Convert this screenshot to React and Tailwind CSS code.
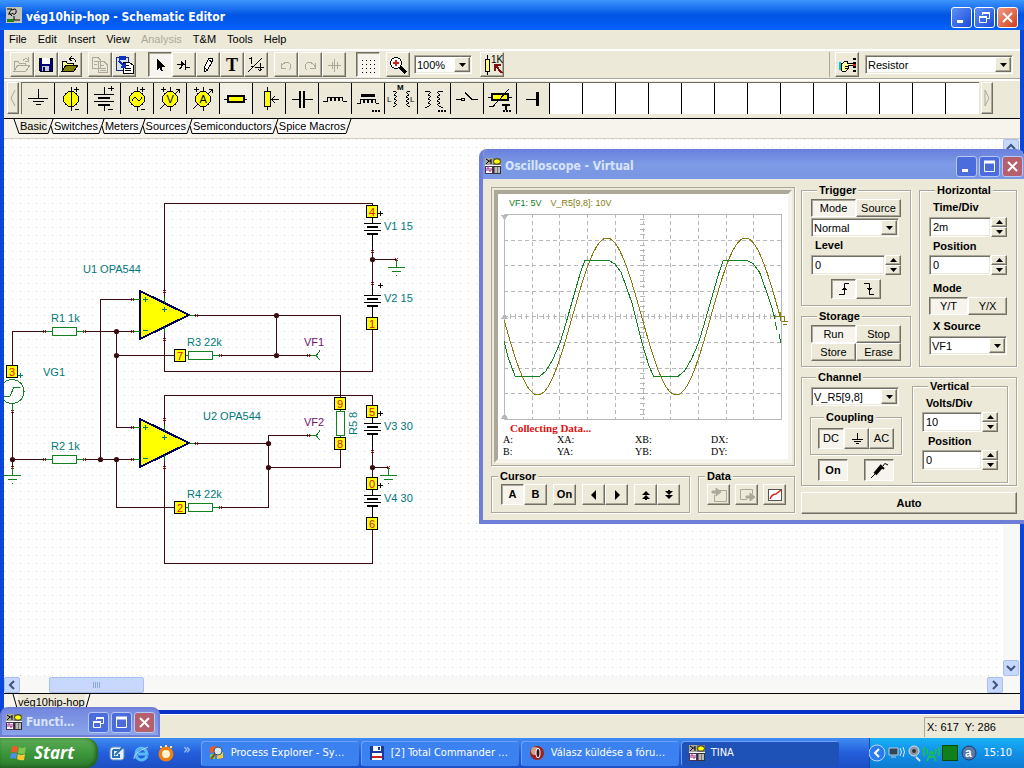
import { useState } from 'react';
import clsx from 'clsx';

const RAISED =
  'border border-t-white border-l-white border-b-[#716f64] border-r-[#716f64] bg-[#ece9d8] shadow-[inset_-1px_-1px_0_#aca899]';
const PRESSED =
  'border border-t-[#716f64] border-l-[#716f64] border-b-white border-r-white bg-[#f6f4ec] shadow-[inset_1px_1px_0_#aca899]';
const SUNKEN =
  'border border-t-[#aca899] border-l-[#aca899] border-b-white border-r-white bg-white shadow-[inset_1px_1px_0_#716f64,inset_-1px_-1px_0_#ece9d8]';
const TITLE_FONT = "font-['DejaVu_Sans_Condensed','DejaVu_Sans',sans-serif] font-bold text-[12px]";

/* ---------- shared controls ---------- */

function BevelButton({ pressed, className, children, ...rest }) {
  return (
    <button
      type="button"
      aria-pressed={pressed}
      className={clsx('flex shrink-0 items-center justify-center', pressed ? PRESSED : RAISED, className)}
      {...rest}
    >
      {children}
    </button>
  );
}

function Triangle({ up }) {
  return (
    <svg width="7" height="4" viewBox="0 0 7 4">
      <path d={up ? 'M0 4L3.5 0L7 4Z' : 'M0 0L3.5 4L7 0Z'} fill="#000" />
    </svg>
  );
}

function Select({ id, label, options, className }) {
  return (
    <div className={clsx('relative h-[19px] text-[11px]', SUNKEN, className)}>
      <select id={id} aria-label={label} className="h-full w-full appearance-none bg-transparent pl-[2px] leading-4 outline-none">
        {options.map((option) => (
          <option key={option}>{option}</option>
        ))}
      </select>
      <span className={clsx('pointer-events-none absolute inset-y-px right-px flex w-4 items-center justify-center', RAISED)}>
        <Triangle />
      </span>
    </div>
  );
}

function Spinner({ id, label, initial, className }) {
  const [value, setValue] = useState(initial);
  return (
    <div className={clsx('flex h-5 text-[11px]', className)}>
      <input
        id={id}
        aria-label={label}
        value={value}
        onChange={(e) => setValue(e.target.value)}
        className={clsx('w-0 min-w-0 flex-1 pl-[3px]', SUNKEN)}
      />
      <div className="flex w-4 flex-col">
        <BevelButton className="flex-1" aria-label="Increase">
          <Triangle up />
        </BevelButton>
        <BevelButton className="flex-1" aria-label="Decrease">
          <Triangle />
        </BevelButton>
      </div>
    </div>
  );
}

function Group({ title, className, children }) {
  return (
    <fieldset className={clsx('min-w-0 border border-[#aca899] shadow-[1px_1px_0_#fff,inset_1px_1px_0_#fff]', className)}>
      <legend className="ml-[6px] bg-[#ece9d8] px-[2px] text-[11px] font-bold leading-3">{title}</legend>
      {children}
    </fieldset>
  );
}

function CaptionButton({ kind, dim }) {
  const blue = dim ? 'bg-[#4a6cdc]' : 'bg-gradient-to-br from-[#5f8ff5] to-[#1c49d8]';
  const red = dim ? 'bg-[#b5606c]' : 'bg-gradient-to-br from-[#f09a80] to-[#cf3a14]';
  return (
    <button
      type="button"
      aria-label={kind}
      className={clsx(
        'flex h-[21px] w-[21px] items-center justify-center rounded-[3px] border',
        dim ? 'border-[#b8c6f4]' : 'border-white',
        kind === 'close' ? red : blue
      )}
    >
      <svg width="15" height="15" viewBox="0 0 15 15" fill="none" stroke="#fff">
        {kind === 'minimize' && <path d="M3 11.5H9" strokeWidth="3" />}
        {kind === 'maximize' && (
          <>
            <path d="M2.5 2.5H12.5V12.5H2.5Z" />
            <path d="M2 3H13" strokeWidth="3" />
          </>
        )}
        {kind === 'restore' && (
          <>
            <path d="M5.5 5V2.5H12.5V8.5H10" />
            <path d="M5 3H13" strokeWidth="2" />
            <path d="M2.5 6.5H9.5V12.5H2.5Z" />
            <path d="M2 7H10" strokeWidth="2" />
          </>
        )}
        {kind === 'close' && <path d="M3 3L12 12M12 3L3 12" strokeWidth="2" />}
      </svg>
    </button>
  );
}

function InstrumentIcon() {
  return (
    <svg width="16" height="16" viewBox="0 0 16 16" className="shrink-0">
      <rect width="16" height="16" fill="#fff" />
      <rect width="8" height="7" fill="#aca899" />
      <path d="M1 1L4 3L1 6M4 3H6M6 1V6" stroke="#000" fill="none" />
      <rect x="8" width="8" height="7" fill="#777" />
      <ellipse cx="12" cy="3.5" rx="3.4" ry="2.6" fill="#ff0" stroke="#000" strokeWidth=".6" />
      <rect x=".5" y="8.5" width="7" height="7" fill="#fff" stroke="#503060" />
      <path d="M2 13V10H4V13H6V10" stroke="#a02080" fill="none" />
      <rect x="8.5" y="8.5" width="7" height="7" fill="#777" stroke="#333" />
      <path d="M10 10H12M13 10H15M10 12H12M13 12H15M10 14H12M13 14H15" stroke="#fff" />
    </svg>
  );
}

/* ---------- main toolbar ---------- */

const FOLDER = 'M4 18V8H8L9 10H15V12M4 18L8 12H20L16 18Z';

const ICONS = {
  openDim: <path d={FOLDER + 'M13 8Q15 4 18 7M18 4V8H15'} stroke="#aca899" />,
  save: (
    <>
      <path d="M5 5H18V18H6L5 17Z" fill="#00007b" stroke="#000" />
      <rect x="8" y="5" width="8" height="6" fill="#fff" stroke="none" />
      <rect x="8" y="13" width="7" height="5" fill="#ccc" stroke="none" />
      <rect x="9" y="14" width="2" height="4" fill="#00007b" stroke="none" />
    </>
  ),
  open: (
    <>
      <path d="M4 18V8H8L9 10H15V12H8Z" fill="#ffff80" stroke="#000" />
      <path d="M4 18L8 12H20L16 18Z" fill="#808000" stroke="#000" />
      <path d="M18 9Q18 5 12 6M14 3L11 6L14 8" stroke="#000" />
    </>
  ),
  copy: <path d="M4.500 4.500H10L12.500 7V15.500H4.500ZM10.500 8.500H16L19.500 12V19.500H10.500ZM6 8H10M6 11H9M12 12H16M12 15H18M12 17H18" stroke="#aca899" />,
  paste: (
    <>
      <path d="M4 4H16V17H4Z" fill="#d8e6f8" stroke="#1c2c70" />
      <path d="M7 3H13V6H7Z" fill="#1030c0" stroke="#1030c0" />
      <path d="M11 9H17L21 12V20H11Z" fill="#fff" stroke="#000" />
      <path d="M13 12H17M13 15H19M13 17H19" stroke="#000" />
      <path d="M7 8L13 14M13 10V14H9" stroke="#1030c0" strokeWidth="2" />
    </>
  ),
  pointer: <path d="M9 6V17L11.500 14.500L13 18H15L13.500 14H17Z" fill="#000" stroke="none" />,
  node: (
    <>
      <path d="M5 11.500H13M13.500 7V17M13 14.500H18M10 14L7 16" stroke="#000" />
      <path d="M9 8L13 11.500L9 14Z" fill="#000" stroke="none" />
    </>
  ),
  pencil: <path d="M8 19L8 15L13 5H16L16.500 8L11.500 17ZM8 15L11.500 17M13 7L16 9" stroke="#000" fill="#fff" />,
  text: (
    <text x="6" y="18" fontSize="18" fontWeight="bold" fill="#000" stroke="none" fontFamily="Liberation Serif, serif">
      T
    </text>
  ),
  fraction: <path d="M5 6L7 5V11M4 19L18 5M11 14H20M16 10V18M14 16L16 18L18 16M7 13H10" stroke="#000" />,
  undo: <path d="M7 10V15H12M7 14Q10 8 15 10Q19 13 15 17" stroke="#aca899" />,
  redo: <path d="M17 10V15H12M17 14Q14 8 9 10Q5 13 9 17" stroke="#aca899" />,
  move: <path d="M6 12.500H19M12.500 6V19M10 9V16M15 9V16" stroke="#aca899" />,
  grid: <path d="M6 7.500H20M6 11.500H20M6 15.500H20M6 19.500H20" stroke="#000" strokeDasharray="1 3" />,
  zoom: (
    <>
      <circle cx="10" cy="10" r="5.500" fill="#fff" stroke="#000" />
      <path d="M7 10H13M10 7V13" stroke="#d02020" strokeWidth="2" />
      <path d="M14 14L20 20" stroke="#000" strokeWidth="3" />
    </>
  ),
  value: (
    <>
      <path d="M7.500 2V22" stroke="#000" />
      <rect x="5.500" y="6.500" width="4" height="12" fill="#ffff80" stroke="#000" />
      <text x="11" y="10" fontSize="10" fill="#000" stroke="none" fontFamily="Liberation Sans, sans-serif">
        1K
      </text>
      <path d="M15 18V12H21M15 12L22 20" stroke="#801010" strokeWidth="2" />
    </>
  ),
  hand: (
    <>
      <path d="M6 10H8L10 8H12V10H18V12H13V16L11 18H7L6 17Z" fill="#ffff9c" stroke="#000" />
      <path d="M10 13H13M10 15H13" stroke="#000" />
      <rect x="4" y="9" width="2" height="8" fill="#00c8c8" stroke="none" />
      <path d="M19.500 5V21" stroke="#000" strokeWidth="3" strokeDasharray="2 2" />
      <path d="M18 12H21" stroke="#d02020" strokeWidth="2" />
    </>
  ),
};

const TOOL_GROUPS = [
  { className: '', tools: [['openDim', 'Open'], ['save', 'Save'], ['open', 'Open recent']] },
  { className: 'ml-[6px]', tools: [['copy', 'Copy'], ['paste', 'Paste']] },
  { className: 'ml-3', tools: [['pointer', 'Select'], ['node', 'Last component'], ['pencil', 'Wire'], ['text', 'Text'], ['fraction', 'Hide/Reconnect']] },
  { className: 'ml-[6px]', tools: [['undo', 'Rotate left'], ['redo', 'Rotate right'], ['move', 'Mirror']] },
  { className: 'ml-[10px]', tools: [['grid', 'Grid']] },
  { className: 'ml-[6px]', tools: [['zoom', 'Zoom']] },
];

function ToolButton({ icon, label }) {
  return (
    <BevelButton pressed={icon === 'pointer' || icon === 'grid'} aria-label={label} className="h-[25px] w-6">
      <svg width="22" height="23" viewBox="1 0 22 23" fill="none" shapeRendering="crispEdges">
        {ICONS[icon]}
      </svg>
    </BevelButton>
  );
}

function Toolbar() {
  return (
    <div className="flex h-[30px] items-center border-t-2 border-b border-t-white border-b-[#aca899] pr-[7px] pl-[6px]">
      {TOOL_GROUPS.map((group) => (
        <div key={group.tools[0][0]} className={clsx('flex', group.className)}>
          {group.tools.map(([icon, label]) => (
            <ToolButton key={icon} icon={icon} label={label} />
          ))}
        </div>
      ))}
      <Select label="Zoom factor" options={['100%', '50%', '200%']} className="ml-1 w-[58px]" />
      <div className="ml-2">
        <ToolButton icon="value" label="Show values" />
      </div>
      <div className="ml-auto flex items-center gap-[6px] border-l border-[#aca899] pl-[5px]">
        <ToolButton icon="hand" label="Find component" />
        <Select label="Component" options={['Resistor', 'Capacitor', 'Inductor']} className="w-[148px]" />
      </div>
    </div>
  );
}

/* ---------- component bar ---------- */

const Y = '#ffff00';
const svgText = { fill: '#000', stroke: 'none', fontFamily: 'Liberation Sans, sans-serif' };

const COMPONENTS = [
  ['Ground', <path d="M16.500 6V15M6 15.500H26M11 18.500H22M14 21.500H19" />],
  ['Voltage source', <><circle cx="16" cy="16" r="7.500" fill={Y} /><path d="M16.500 4V28M19 6.500H24M21.500 4V9M20 26.500H24" /></>],
  ['Battery', <><path d="M16.500 4V11M16.500 22V28M6 11.500H26M6 18.500H26M20 5.500H26M23.500 3V8M20 26.500H25" /><path d="M10 15H22M10 22H22" strokeWidth="2" /></>],
  ['Voltage generator', <><circle cx="16" cy="16" r="7.500" fill={Y} /><path d="M11 18Q13 12 16 16T21 14M16.500 4V8M16.500 24V28M19 6.500H24M21.500 4V9M20 26.500H24" /></>],
  ['Voltmeter', <><path d="M6 26L26 6M22 6.500H26M25.500 6V10M16.500 4V28M7 6.500H12M9.500 4V9" /><circle cx="16" cy="16" r="7.500" fill={Y} /><text x="12.500" y="20" fontSize="11" {...svgText}>V</text></>],
  ['Ammeter', <><path d="M6 26L26 6M22 6.500H26M25.500 6V10M16.500 4V28M7 6.500H12M9.500 4V9" /><circle cx="16" cy="16" r="7.500" fill={Y} /><text x="12.500" y="20" fontSize="11" {...svgText}>A</text></>],
  ['Resistor', <><path d="M4 16.500H27" /><rect x="8" y="13" width="16" height="6" fill={Y} strokeWidth="2" /></>],
  ['Potentiometer', <><path d="M14.500 4V27M19 16.500H26M22 13L19 16.500L22 20" /><rect x="11.500" y="8.500" width="6" height="15" fill={Y} /></>],
  ['Capacitor', <><path d="M6 16.500H14M18 16.500H27" /><path d="M14 8V25M18 8V25" strokeWidth="2" /></>],
  ['Inductor', <path d="M4 18H8Q8 14 10 14T12 18Q12 14 14 14T16 18Q16 14 18 14T20 18Q20 14 22 14T24 18H28" />],
  ['Coil with core', <><path d="M5 20H8Q8 16 10 16T12 20Q12 16 14 16T16 20Q16 16 18 16T20 20Q20 16 22 16T24 20H27" /><path d="M9 12.500H23" strokeWidth="3" /><path d="M20 28H28" strokeWidth="2" strokeDasharray="2 1" /></>],
  ['Coupled inductors', <><path d="M8 8Q14 9 9 12Q14 13 9 16Q14 17 9 20Q14 21 8 24M25 8Q19 9 24 12Q19 13 24 16Q19 17 24 20Q19 21 25 24" /><text x="12" y="7" fontSize="8" fontWeight="bold" {...svgText}>M</text><text x="2" y="19" fontSize="8" {...svgText}>L</text><text x="25" y="19" fontSize="8" {...svgText}>L</text></>],
  ['Transformer', <><path d="M7 8H9Q15 9 10 12Q15 13 10 16Q15 17 10 20Q15 21 9 24H7M25 8H23Q17 9 22 12Q17 13 22 16Q17 17 22 20Q17 21 23 24H25" /><path d="M20 28H28" strokeWidth="2" strokeDasharray="2 1" /></>],
  ['Switch', <><path d="M5 16.500H10M14 10L21 16.500H27" strokeWidth="1.500" /><circle cx="12" cy="16.500" r="1.500" /></>],
  ['Thermistor', <><path d="M4 14.500H28" /><rect x="8" y="11" width="16" height="6" fill={Y} strokeWidth="2" /><path d="M5 23.500H9L25 6" /><path d="M18 22H26M22 22V27" strokeWidth="2" /><path d="M19 28H27" strokeWidth="2" strokeDasharray="2 1" /></>],
  ['Jumper', <><path d="M9 16.500H20" /><path d="M20.500 9V23" strokeWidth="3" /></>],
];

function ComponentBar() {
  return (
    <div className="flex h-[39px] items-start border-t-2 border-white pt-[1px] pr-[27px] pl-[3px]">
      <BevelButton aria-label="Scroll left" className="h-8 w-3">
        <svg width="6" height="20" viewBox="0 0 6 20" fill="none" stroke="#aca899">
          <path d="M5 2L1 10L5 18" />
        </svg>
      </BevelButton>
      <div className="ml-[2px] flex h-8 w-0 flex-1 overflow-hidden border-t border-l border-[#716f64] bg-white">
        {COMPONENTS.map(([label, drawing]) => (
          <button
            type="button"
            key={label}
            aria-label={label}
            className={clsx('w-[33px] shrink-0 border-r border-black', label === 'Resistor' ? 'bg-[#f2f0e4]' : 'bg-[#ece9d8]')}
          >
            <svg width="32" height="31" viewBox="0 0 32 31" fill="none" stroke="#000" shapeRendering="crispEdges">
              {drawing}
            </svg>
          </button>
        ))}
        {Array.from({ length: 12 }, (_, i) => (
          <span key={i} className="w-[33px] shrink-0 border-r border-black" />
        ))}
      </div>
      <BevelButton aria-label="Scroll right" className="ml-[2px] h-8 w-3">
        <svg width="6" height="20" viewBox="0 0 6 20" fill="none" stroke="#aca899">
          <path d="M1 2L5 10L1 18Z" />
        </svg>
      </BevelButton>
    </div>
  );
}

const TABS = ['Basic', 'Switches', 'Meters', 'Sources', 'Semiconductors', 'Spice Macros'];

function ComponentTabs() {
  return (
    <div className="flex h-[21px] items-start border-t border-b border-t-black border-b-[#d0cdc0] bg-[#f6f4ec] pl-[9px]">
      <svg width="7" height="15" viewBox="0 0 7 15" fill="none" stroke="#000" className="shrink-0">
        <path d="M1 0L6 14.500H7" />
      </svg>
      {TABS.map((tab, i) => (
        <div key={tab} className="flex">
          <button
            type="button"
            className={clsx('h-[15px] border-b border-black text-[11px] leading-[14px]', i === 0 ? 'bg-[#ece9d8]' : 'bg-white')}
          >
            {tab}
          </button>
          <svg width="7" height="15" viewBox="0 0 7 15" fill="none" stroke="#000" className="shrink-0">
            <path d="M0 14.500H1L6 0" />
            {i < TABS.length - 1 && <path d="M4 7L6 14.500H7" />}
          </svg>
        </div>
      ))}
    </div>
  );
}

/* ---------- schematic ---------- */

const WIRES = [
  'M164.500 304V203.500H372.500V206',
  'M164.500 327V371.500H372.500V329',
  'M140 299.500H100.500V459.500',
  'M140 331.500H12.500V366',
  'M116.500 331V427.500H140',
  'M116.500 355.500H174',
  'M188 315.500H340.500V397',
  'M276.500 315V355.500',
  'M213 355.500H316',
  'M12.500 404V475',
  'M12.500 459.500H140',
  'M116.500 459V507.500H174',
  'M213 507.500H268.500V435.500H316',
  'M188 443.500H268',
  'M268 467.500H340.500V449',
  'M164.500 432V395.500H372.500V406',
  'M164.500 456V563.500H372.500V529',
  'M372.500 235V295M372.500 259.500H396',
  'M372.500 435V478M372.500 467.500H388',
];

const JOINTS = [[116, 331], [116, 355], [372, 259], [276, 315], [276, 355], [12, 459], [100, 459], [116, 459], [268, 443], [268, 467], [372, 467]];
const PINS = [
  [44, 331], [84, 331], [132, 299], [132, 331], [196, 315], [220, 355], [308, 355], [132, 427], [132, 459], [196, 443],
  [44, 459], [84, 459], [220, 507], [308, 435], [164, 291], [164, 339], [164, 419], [164, 467], [372, 251], [372, 283],
  [396, 259], [372, 451], [388, 467], [12, 411], [12, 467],
];
const NODES = [['4', 372, 211], ['1', 372, 323], ['3', 12, 371], ['7', 180, 355], ['2', 180, 507], ['9', 340, 403], ['8', 340, 443], ['5', 372, 411], ['0', 372, 483], ['6', 372, 523]];
const RESISTORS = [[52, 331], [52, 459], [188, 355], [188, 507]];
const BATTERIES = [223, 295, 423, 495];
const GROUNDS = [[396, 267], [388, 475], [12, 475]];
const LABELS = [
  ['U1 OPA544', 83, 273], ['R1 1k', 51, 322], ['R3 22k', 187, 346], ['VG1', 43, 376], ['R2 1k', 51, 450], ['U2 OPA544', 203, 420],
  ['R4 22k', 187, 498], ['V1 15', 384, 230], ['V2 15', 384, 302], ['V3 30', 384, 430], ['V4 30', 384, 502],
];

function OpAmp({ y }) {
  return (
    <g transform={`translate(140 ${y})`}>
      <path d="M0 -24L49 0L0 24Z" fill="#ffff00" stroke="#000060" strokeWidth="2" />
      <path d="M3 -15.500H8M5.500 -18V-13M3 15.500H8M22 -5.500H27M24.500 -8V-3" stroke="#007878" />
      <path d="M-6 -15.500H0M-6 16.500H0M24.500 -18V-12M24.500 12V18M49 .5H54" stroke="#008000" />
    </g>
  );
}

function Schematic() {
  return (
    <svg className="block h-full w-full" fill="none" fontFamily="Liberation Sans, sans-serif" fontSize="11" shapeRendering="crispEdges">
      <defs>
        <pattern id="dots" width="8" height="8" patternUnits="userSpaceOnUse">
          <path d="M0 .5H1" stroke="#c4d8dc" />
        </pattern>
      </defs>
      <rect width="100%" height="100%" fill="url(#dots)" />
      <g transform="translate(-4 -139)">
        <path d={WIRES.join('')} stroke="#380c10" />
        {RESISTORS.map(([x, y]) => (
          <g key={`${x}-${y}`} stroke="#108020">
            <path d={`M${x - 6} ${y + 0.5}H${x + 32}`} />
            <rect x={x + 0.5} y={y - 3.5} width="24" height="8" fill="#fff" />
          </g>
        ))}
        <rect x="336.500" y="411.500" width="8" height="24" fill="#fff" stroke="#108020" />
        <path d="M340.500 409V411M340.500 436V438" stroke="#108020" />
        {BATTERIES.map((y) => (
          <g key={y} stroke="#000">
            <path d={`M372.500 ${y - 8}V${y}M364 ${y + 0.5}H381M364 ${y + 7.5}H381M372.500 ${y + 11}V${y + 24}M378 ${y - 9.5}H383M380.500 ${y - 12}V${y - 7}`} />
            <path d={`M367 ${y + 4}H378M367 ${y + 11}H378`} strokeWidth="2" />
          </g>
        ))}
        {GROUNDS.map(([x, y]) => (
          <path key={x} d={`M${x + 0.5} ${y - 8}V${y}M${x - 8} ${y + 0.5}H${x + 9}M${x - 4} ${y + 4.5}H${x + 5}M${x} ${y + 8.5}H${x + 1}`} stroke="#108020" />
        ))}
        <circle cx="12" cy="391.500" r="12" stroke="#108020" />
        <path d="M4 396H10L14 387H20M12.500 404V411" stroke="#108020" />
        <path d="M18 375.500H23M20.500 373V378" stroke="#007878" />
        <path d="M311 355.500H316L319 352V350M316 355.500L319 359V360M311 435.500H316L319 432V430M316 435.500L319 439V440" stroke="#108020" />
        <OpAmp y={315} />
        <OpAmp y={443} />
        {PINS.map(([x, y]) => (
          <path key={`${x}-${y}`} d={`M${x - 1} ${y - 1}L${x + 2} ${y + 2}M${x + 2} ${y - 1}L${x - 1} ${y + 2}`} stroke="#a02020" />
        ))}
        {JOINTS.map(([x, y]) => (
          <circle key={`${x}-${y}`} cx={x + 0.5} cy={y + 0.5} r="2.600" fill="#380c10" shapeRendering="auto" />
        ))}
        {NODES.map(([name, x, y]) => (
          <g key={name}>
            <rect x={x - 5.5} y={y - 5.5} width="11" height="12" fill="#ffff00" stroke="#000" />
            <text x={x} y={y + 5} textAnchor="middle" fill="#e01010">{name}</text>
          </g>
        ))}
        {LABELS.map(([text, x, y]) => (
          <text key={text} x={x} y={y} fill="#007878">{text}</text>
        ))}
        <text x="304" y="346" fill="#701070">VF1</text>
        <text x="304" y="426" fill="#701070">VF2</text>
        <text transform="translate(357 435) rotate(-90)" fill="#007878">R5 8</text>
      </g>
    </svg>
  );
}

function ScrollButton({ direction, d }) {
  return (
    <button type="button" aria-label={`Scroll ${direction}`} className="flex h-4 w-4 shrink-0 items-center justify-center rounded-[2px] border border-[#a8bdf0] bg-[#c8d8fc]">
      <svg width="10" height="10" viewBox="0 0 10 10" fill="none" stroke="#3c5480" strokeWidth="2">
        <path d={d} />
      </svg>
    </button>
  );
}

/* ---------- oscilloscope ---------- */

const PERIOD = 138.5;
const SINE = Array.from({ length: 139 }, (_, i) => {
  const x = 6 + i * 2;
  const y = 107.5 - 78.5 * Math.cos(((x - 109) * 2 * Math.PI) / PERIOD);
  return `${i ? 'L' : 'M'}${x} ${y.toFixed(1)}`;
}).join('');

const CLIPPED = [[17, 167], [42, 167], [48, 162], [55, 150], [62, 134], [68, 114], [82, 65], [87, 51], [110, 51], [117, 55], [123, 63], [134, 94], [144, 134], [151, 157]];
const CLIPPED_PATH =
  'M6 132L10 148' +
  CLIPPED.map(([x, y]) => `L${x} ${y}`).join('') +
  CLIPPED.slice(0, 12).map(([x, y]) => `L${x + PERIOD} ${y}`).join('') +
  'L277 110M277 113L279 121M281 125L283 134';

function ScopePlot() {
  const cols = Array.from({ length: 9 }, (_, i) => Math.round(6 + (i + 1) * 27.7) + 0.5);
  const rows = Array.from({ length: 7 }, (_, i) => Math.round(5 + (i + 1) * 25.6) + 0.5);
  return (
    <svg width="290" height="213" viewBox="0 0 290 213" fill="none" className="block" shapeRendering="crispEdges">
      <path d={cols.map((x) => `M${x} 5V210`).join('') + rows.map((y) => `M6 ${y}H283`).join('')} stroke="#b8b8b8" strokeDasharray="4 3" />
      <rect x="6.500" y="5.500" width="277" height="205" stroke="#b8b8b8" />
      <path d="M6 107.500H283" stroke="#b8b8b8" strokeWidth="5" strokeDasharray="1 4.540" />
      <path d="M144.500 5V210" stroke="#b8b8b8" strokeWidth="5" strokeDasharray="1 4.120" />
      <path d="M3 6H10L6.500 11ZM3 210H10L6.500 204ZM3 110H10L6.500 105Z" fill="#b8b8b8" />
      <path d={CLIPPED_PATH} stroke="#108020" />
      <path d={SINE} stroke="#847c10" />
      <path d="M277 107.500H287M286.500 107V112M283 112.500H291M285 115.500H289M282.500 103V112" stroke="#847c10" />
    </svg>
  );
}

function ScopeScreen() {
  return (
    <div className="border border-[#aca899] p-[2px] shadow-[1px_1px_0_#fff]">
      <div className="h-[273px] border-4 border-t-[#aca899] border-r-[#f6f4ec] border-b-[#f6f4ec] border-l-[#aca899] bg-white">
        <div className="flex h-[15px] items-end gap-[9px] pl-[11px] text-[9px] leading-3">
          <span className="text-[#108020]">VF1: 5V</span>
          <span className="text-[#847c10]">V_R5[9,8]: 10V</span>
        </div>
        <ScopePlot />
        <div className="font-['Liberation_Serif',serif] text-[10px] leading-3">
          <p className="pl-3 text-[11px] font-bold text-[#e01010]">Collecting Data...</p>
          <div className="grid grid-cols-[54px_78px_76px_1fr] pl-[5px]">
            {['A:', 'XA:', 'XB:', 'DX:', 'B:', 'YA:', 'YB:', 'DY:'].map((name) => (
              <span key={name}>{name}</span>
            ))}
          </div>
        </div>
      </div>
    </div>
  );
}

function Glyph({ d, color = '#000', filled = true, size = 16 }) {
  return (
    <svg width={size} height={size} viewBox="0 0 16 16" fill={filled ? color : 'none'} stroke={filled ? 'none' : color}>
      <path d={d} />
    </svg>
  );
}

function CursorAndData() {
  const btn = 'h-[21px] w-[23px] text-[11px] font-bold';
  return (
    <div className="mt-1 flex justify-between">
      <Group title="Cursor" className="h-[43px] w-[199px]">
        <div className="flex gap-[6px] pt-[2px] pl-[9px]">
          <div className="flex">
            <BevelButton pressed className={btn}>A</BevelButton>
            <BevelButton className={btn}>B</BevelButton>
          </div>
          <BevelButton className={btn}>On</BevelButton>
          <div className="flex">
            <BevelButton className={btn} aria-label="Left"><Glyph d="M10 3V13L5 8Z" /></BevelButton>
            <BevelButton className={btn} aria-label="Right"><Glyph d="M6 3V13L11 8Z" /></BevelButton>
          </div>
          <div className="flex">
            <BevelButton className={btn} aria-label="Top"><Glyph d="M4 8L8 4L12 8ZM4 12L8 8L12 12ZM7 12H9V13H7Z" /></BevelButton>
            <BevelButton className={btn} aria-label="Bottom"><Glyph d="M4 4H12L8 8ZM4 8H12L8 12ZM7 3H9V4H7Z" /></BevelButton>
          </div>
        </div>
      </Group>
      <Group title="Data" className="h-[43px] w-[97px]">
        <div className="flex gap-[5px] pt-[2px] pl-[8px]">
          <BevelButton className={btn} aria-label="Import">
            <svg width="18" height="16" viewBox="0 0 18 16" fill="none" stroke="#aca899">
              <path d="M4.500 8V14.500H16.500V3.500H9" />
              <path d="M2 4H6V1L11 5L6 9V6H2Z" fill="#aca899" />
            </svg>
          </BevelButton>
          <BevelButton className={btn} aria-label="Export">
            <svg width="18" height="16" viewBox="0 0 18 16" fill="none" stroke="#aca899">
              <path d="M9 12.500H2.500V2.500H14.500V7" />
              <path d="M8 9H12V6L17 10L12 14V11H8Z" fill="#aca899" />
            </svg>
          </BevelButton>
          <BevelButton className={btn} aria-label="Diagram">
            <svg width="16" height="14" viewBox="0 0 16 14" fill="none">
              <rect x="1.500" y="1.500" width="13" height="11" fill="#fff" stroke="#555" />
              <path d="M3 11Q5 6 9 6L14 2" stroke="#e02020" strokeWidth="1.500" />
            </svg>
          </BevelButton>
        </div>
      </Group>
    </div>
  );
}

const FIELD_LABEL = 'block text-[11px] font-bold leading-[14px]';

function TriggerGroup() {
  return (
    <Group title="Trigger" className="h-[122px] px-[9px]">
      <div className="mt-[3px] flex text-[11px]">
        <BevelButton pressed className="h-[18px] flex-1">Mode</BevelButton>
        <BevelButton className="h-[18px] flex-1">Source</BevelButton>
      </div>
      <Select label="Trigger mode" options={['Normal', 'Auto', 'Single']} className="mt-[1px] w-[88px]" />
      <label htmlFor="level" className={clsx(FIELD_LABEL, 'mt-[1px] pl-1')}>Level</label>
      <Spinner id="level" initial="0" className="mt-[3px]" />
      <div className="mt-1 flex justify-center">
        <BevelButton pressed aria-label="Rising edge" className="h-5 w-[25px]">
          <Glyph filled={false} d="M3 13.500H8.500V2.500H13M6 8.500H11M7 7.500H10M8 6.500H9" />
        </BevelButton>
        <BevelButton aria-label="Falling edge" className="h-5 w-[25px]">
          <Glyph filled={false} d="M3 2.500H8.500V13.500H13M6 7.500H11M7 8.500H10M8 9.500H9" />
        </BevelButton>
      </div>
    </Group>
  );
}

function StorageGroup() {
  const [active, setActive] = useState('Run');
  return (
    <Group title="Storage" className="h-[57px] px-[9px]">
      <div className="mt-[3px] grid grid-cols-2 text-[11px]">
        {['Run', 'Stop', 'Store', 'Erase'].map((name) => (
          <BevelButton key={name} pressed={name === active} onClick={() => setActive(name)} className="h-[18px]">
            {name}
          </BevelButton>
        ))}
      </div>
    </Group>
  );
}

function HorizontalGroup() {
  return (
    <Group title="Horizontal" className="w-[98px] px-[9px]">
      <label htmlFor="time-div" className={clsx(FIELD_LABEL, 'mt-1 pl-1')}>Time/Div</label>
      <Spinner id="time-div" initial="2m" className="mt-[3px]" />
      <label htmlFor="h-position" className={clsx(FIELD_LABEL, 'mt-[2px] pl-1')}>Position</label>
      <Spinner id="h-position" initial="0" className="mt-[2px]" />
      <p className={clsx(FIELD_LABEL, 'mt-[6px] pl-1')}>Mode</p>
      <div className="mt-[2px] flex text-[11px]">
        <BevelButton pressed className="h-[18px] flex-1">Y/T</BevelButton>
        <BevelButton className="h-[18px] flex-1">Y/X</BevelButton>
      </div>
      <label htmlFor="x-source" className={clsx(FIELD_LABEL, 'mt-1 pl-1')}>X Source</label>
      <Select id="x-source" options={['VF1', 'VF2', 'V_R5[9,8]']} className="mt-[3px]" />
    </Group>
  );
}

function ChannelGroup() {
  return (
    <Group title="Channel" className="mt-1 h-[115px] pr-2 pl-2">
      <div className="flex gap-[10px]">
        <div className="w-[92px]">
          <Select label="Channel" options={['V_R5[9,8]', 'VF1', 'VF2']} className="mt-[4px] ml-[1px] w-[88px]" />
          <Group title="Coupling" className="mt-[5px] h-[44px] px-[7px]">
            <div className="mt-[5px] flex text-[11px]">
              <BevelButton pressed className="h-[21px] w-[26px]">DC</BevelButton>
              <BevelButton aria-label="Ground" className="h-[21px] w-[25px]">
                <Glyph filled={false} d="M8.500 2V8M3 8.500H14M5 10.500H12M7 12.500H10" />
              </BevelButton>
              <BevelButton className="h-[21px] w-[25px]">AC</BevelButton>
            </div>
          </Group>
          <div className="mt-1 flex justify-between px-2 text-[11px] font-bold">
            <BevelButton pressed className="h-[22px] w-[30px]">On</BevelButton>
            <BevelButton pressed aria-label="Probe" className="h-[22px] w-[30px]">
              <svg width="20" height="18" viewBox="0 0 20 18" stroke="#000" fill="none">
                <path d="M2 17L6 13M14 5Q16 1 17 3L19 4" />
                <path d="M6 13L12 6" strokeWidth="4" />
                <path d="M11 4L15 8" strokeWidth="2" />
              </svg>
            </BevelButton>
          </div>
        </div>
        <Group title="Vertical" className="mt-[-3px] h-[103px] flex-1 px-[9px]">
          <label htmlFor="volts-div" className={clsx(FIELD_LABEL, 'mt-[4px] pl-1')}>Volts/Div</label>
          <Spinner id="volts-div" initial="10" className="mt-[2px]" />
          <label htmlFor="v-position" className={clsx(FIELD_LABEL, 'mt-[2px] pl-[6px]')}>Position</label>
          <Spinner id="v-position" initial="0" className="mt-[2px]" />
        </Group>
      </div>
    </Group>
  );
}

function Oscilloscope() {
  return (
    <section className="absolute top-[149px] right-0 w-[545px] overflow-hidden rounded-t-lg border-b-4 border-l-4 border-[#6f7fd8] bg-[#ece9d8]">
      <header className="-ml-1 flex h-[30px] items-center bg-gradient-to-b from-[#6a80dc] via-[#7c9ae6] to-[#7a96e4] pt-1 pr-[1px] pl-[6px]">
        <InstrumentIcon />
        <h2 className={clsx(TITLE_FONT, 'flex-1 pl-1 text-[#d8e4f8]')}>Oscilloscope - Virtual</h2>
        <div className="flex gap-[2px]">
          <CaptionButton kind="minimize" dim />
          <CaptionButton kind="maximize" dim />
          <CaptionButton kind="close" dim />
        </div>
      </header>
      <div className="flex gap-[6px] pt-[5px] pr-[7px] pb-[6px] pl-2">
        <div className="w-[304px] shrink-0 pt-[3px]">
          <ScopeScreen />
          <CursorAndData />
        </div>
        <div className="min-w-0 flex-1">
          <div className="flex gap-2">
            <div className="flex w-[110px] flex-col gap-1">
              <TriggerGroup />
              <StorageGroup />
            </div>
            <HorizontalGroup />
          </div>
          <ChannelGroup />
          <BevelButton className="mt-[6px] h-[22px] w-full text-[11px] font-bold">Auto</BevelButton>
        </div>
      </div>
    </section>
  );
}

/* ---------- desktop ---------- */

function Taskbar() {
  const task = 'flex h-[25px] w-[158px] min-w-0 items-center gap-[6px] rounded-[3px] pl-2 text-left shadow-[inset_1px_1px_0_#6fa0f8]';
  return (
    <footer className="flex h-[30px] shrink-0 items-center bg-gradient-to-b from-[#3f8cf3] via-[#245edb] to-[#1c4fc4] font-['DejaVu_Sans_Condensed','DejaVu_Sans',sans-serif] text-[11px] text-white">
      <button type="button" className="flex h-[30px] w-[98px] items-center gap-[6px] rounded-r-xl bg-gradient-to-b from-[#5eac56] via-[#3c973b] to-[#2d7a2d] pl-[10px] shadow-[inset_-2px_-1px_4px_#1c5a1c]">
        <svg width="18" height="18" viewBox="0 0 18 18">
          <path d="M2 3Q5 1 8 3L7 9Q4 7 1 9Z" fill="#f05a28" />
          <path d="M9 3Q12 5 16 3L15 9Q12 11 8 9Z" fill="#7ec850" />
          <path d="M1 10Q4 8 7 10L6 15Q3 13 0 15Z" fill="#4a90f0" />
          <path d="M8 10Q11 12 15 10L14 16Q11 17 7 15Z" fill="#fbc830" />
        </svg>
        <span className="font-['Open_Sans',sans-serif] text-[17px] font-bold italic">Start</span>
      </button>
      <div className="ml-[9px] flex items-center gap-[7px] pl-[2px]">
        <svg width="17" height="17" viewBox="0 0 17 17">
          <rect x="1" y="2" width="14" height="13" rx="3" fill="#e8f2fc" stroke="#6090c8" />
          <path d="M4 5H10M4 5V12H10V9M6 10L14 2" stroke="#2870b8" fill="none" strokeWidth="2" />
        </svg>
        <svg width="17" height="17" viewBox="0 0 17 17" fill="none">
          <path d="M14 11Q12 15 8 15Q3 14 3 9Q3 4 8 3Q13 3 14 9H5" stroke="#58b8f8" strokeWidth="3" />
          <path d="M1 14Q0 8 15 2" stroke="#a8dcf8" />
        </svg>
        <svg width="18" height="17" viewBox="0 0 18 17">
          <circle cx="9" cy="9" r="7.500" fill="#f08010" />
          <circle cx="9" cy="9" r="4" fill="#fff4d0" />
          <path d="M3 1H5V3H3ZM8 0H10V2H8ZM13 1H15V3H13Z" fill="#ffe0a0" />
        </svg>
      </div>
      <span className="ml-2 pb-2 text-[14px] leading-4 text-[#b8d0f8]">»</span>
      <div className="ml-[10px] flex flex-1 gap-[2px]">
        <button type="button" className={clsx(task, 'bg-[#3c81f0]')}>
          <svg width="16" height="16" viewBox="0 0 16 16" className="shrink-0">
            <path d="M1 2L7 1V7L1 8Z" fill="#f05a28" />
            <path d="M8 8L14 7V13L8 14Z" fill="#fbc830" />
            <path d="M1 9L6 9V14L1 14Z" fill="#7ec850" />
            <circle cx="9" cy="6" r="4" fill="#d8ecfc" stroke="#456" />
            <path d="M6 9L2 14" stroke="#842" strokeWidth="2" />
          </svg>
          <span className="truncate">Process Explorer - Sy…</span>
        </button>
        <button type="button" className={clsx(task, 'bg-[#3c81f0]')}>
          <svg width="16" height="16" viewBox="0 0 16 16" className="shrink-0">
            <path d="M1 1H15V15H1Z" fill="#1838a0" />
            <path d="M4 1H12V6H4ZM3 8H13V15H3Z" fill="#fff" />
            <path d="M3 12H13" stroke="#d02020" strokeWidth="2" />
            <path d="M9 2H11V5H9Z" fill="#1838a0" />
          </svg>
          <span className="truncate">[2] Total Commander …</span>
        </button>
        <button type="button" className={clsx(task, 'bg-[#3c81f0]')}>
          <svg width="16" height="16" viewBox="0 0 16 16" className="shrink-0">
            <circle cx="8" cy="8" r="7" fill="#a02020" />
            <circle cx="6" cy="6" r="4" fill="#d8a080" />
            <ellipse cx="9" cy="8" rx="2.500" ry="5" fill="#fff" />
            <ellipse cx="9" cy="8" rx="1.500" ry="4" fill="#301828" />
          </svg>
          <span className="truncate">Válasz küldése a fóru…</span>
        </button>
        <button type="button" className={clsx(task, 'bg-[#1e52b7]')}>
          <InstrumentIcon />
          <span>TINA</span>
        </button>
      </div>
      <div className="flex h-[30px] items-center bg-gradient-to-b from-[#18b0f4] via-[#1290e9] to-[#0e7cd0] pr-3 shadow-[inset_1px_0_0_#0a4aa8]">
        <svg width="112" height="20" viewBox="0 0 112 20" fill="none">
          <circle cx="8" cy="10" r="8" fill="#2a7cf0" stroke="#b8dcff" />
          <path d="M10 6L6 10L10 14" stroke="#fff" strokeWidth="2" />
          <path d="M20 5H29V12H20ZM22 14H27" fill="#345" stroke="#bcd" />
          <path d="M31 5Q34 9 31 13M34 4Q37 9 34 14" stroke="#dce8f4" />
          <circle cx="45" cy="8" r="5" fill="#8a98a8" stroke="#d8e0e8" />
          <circle cx="45" cy="8" r="2" fill="#333" />
          <path d="M47 14L51 18" stroke="#d8e0e8" strokeWidth="2" />
          <path d="M56 4Q53 8 56 13M69 4Q72 8 69 13M59 6Q57 8 59 11M66 6Q68 8 66 11M62.500 8L58 18M62.500 8L67 18M60 14H65" stroke="#18c838" strokeWidth="1.500" />
          <rect x="73.500" y="2.500" width="15" height="15" fill="#10801c" stroke="#064c0c" />
          <circle cx="100" cy="10" r="7" fill="#5878a8" stroke="#1c3a6c" />
          <text x="96" y="14" fontSize="12" fontWeight="bold" fill="#fff" fontFamily="Liberation Sans, sans-serif">a</text>
        </svg>
        <span className="ml-[2px]">15:10</span>
      </div>
    </footer>
  );
}

const MENU = ['File', 'Edit', 'Insert', 'View', 'Analysis', 'T&M', 'Tools', 'Help'];

export default function App() {
  return (
    <div className="relative flex h-screen flex-col overflow-hidden bg-[#ece9d8] font-['Liberation_Sans',Arial,sans-serif] text-[11px] text-black">
      <main className="flex min-h-0 flex-1 flex-col border-b-4 border-[#0831c8]">
        <header className="flex h-[30px] shrink-0 items-center bg-gradient-to-b from-[#3d95ff] via-[#0054e3] to-[#0662fb] pr-[6px] pl-[6px]">
          <svg width="16" height="16" viewBox="0 0 16 16" className="shrink-0">
            <rect width="16" height="16" fill="#c4c4bc" />
            <path d="M1 2H6L3 6L6 9M6 3Q11 0 10 6Q8 9 6 6M8 9V13H14M2 7H6" stroke="#000" fill="none" />
            <rect x="1" y="12" width="7" height="3" fill="#208020" />
          </svg>
          <h1 className={clsx(TITLE_FONT, 'flex-1 pt-1 pl-1 text-white')}>vég10hip-hop - Schematic Editor</h1>
          <div className="flex gap-[2px] pt-1">
            <CaptionButton kind="minimize" />
            <CaptionButton kind="restore" />
            <CaptionButton kind="close" />
          </div>
        </header>
        <div className="flex min-h-0 flex-1 flex-col border-r-4 border-l-4 border-[#0846dc] bg-[#ece9d8]">
          <nav className="flex h-[19px] shrink-0 items-center gap-[11px] pl-[5px]">
            {MENU.map((item) => (
              <button type="button" key={item} disabled={item === 'Analysis'} className="disabled:text-[#aca899]">
                {item}
              </button>
            ))}
          </nav>
          <div className="shrink-0">
            <Toolbar />
            <ComponentBar />
            <ComponentTabs />
          </div>
          <div className="flex min-h-0 flex-1 bg-white">
            <div className="min-w-0 flex-1">
              <Schematic />
            </div>
            <div className="flex w-[17px] flex-col justify-between bg-[#f8f8f6]">
              <ScrollButton direction="up" d="M1 7L5 3L9 7" />
              <ScrollButton direction="down" d="M1 3L5 7L9 3" />
            </div>
          </div>
          <div className="flex h-[17px] shrink-0 items-center bg-[#f8f8f6] pr-[17px]">
            <ScrollButton direction="left" d="M7 1L3 5L7 9" />
            <div className="ml-[29px] flex h-4 w-[95px] items-center justify-center gap-px rounded-[2px] border border-[#a8bdf0] bg-[#c8d8fc]">
              {[0, 1, 2, 3].map((i) => (
                <span key={i} className="h-[6px] w-px bg-[#8ca8e8]" />
              ))}
            </div>
            <div className="ml-auto">
              <ScrollButton direction="right" d="M3 1L7 5L3 9" />
            </div>
          </div>
          <div className="flex h-[17px] shrink-0 items-start border-t border-black bg-[#f6f4ec] pl-2">
            <svg width="6" height="16" viewBox="0 0 6 16" fill="none" stroke="#000">
              <path d="M1 0L5 14" />
            </svg>
            <button type="button" className="bg-[#ece9d8] leading-4">vég10hip-hop</button>
            <svg width="6" height="16" viewBox="0 0 6 16" fill="none" stroke="#000">
              <path d="M5 0L1 14" />
            </svg>
          </div>
        </div>
      </main>

      <div className="flex h-6 shrink-0 items-center justify-end border-t border-white bg-[#ece9d8]">
        <p className="flex h-5 w-[100px] items-center border-t border-l border-[#aca899] pl-[2px] font-['Liberation_Sans',sans-serif]">
          X: 617&nbsp; Y: 286
        </p>
      </div>
      <Taskbar />

      <Oscilloscope />

      <section className="absolute bottom-[31px] left-0 flex h-[30px] w-[160px] items-center rounded-t-lg border-2 border-[#6f7fd8] bg-gradient-to-b from-[#7488de] to-[#8aa4ea] pl-1">
        <InstrumentIcon />
        <h2 className={clsx(TITLE_FONT, 'min-w-0 flex-1 truncate pl-1 text-[#d8e4f8]')}>Functi…</h2>
        <div className="flex gap-[2px] pr-[3px]">
          <CaptionButton kind="restore" dim />
          <CaptionButton kind="maximize" dim />
          <CaptionButton kind="close" dim />
        </div>
      </section>
    </div>
  );
}
